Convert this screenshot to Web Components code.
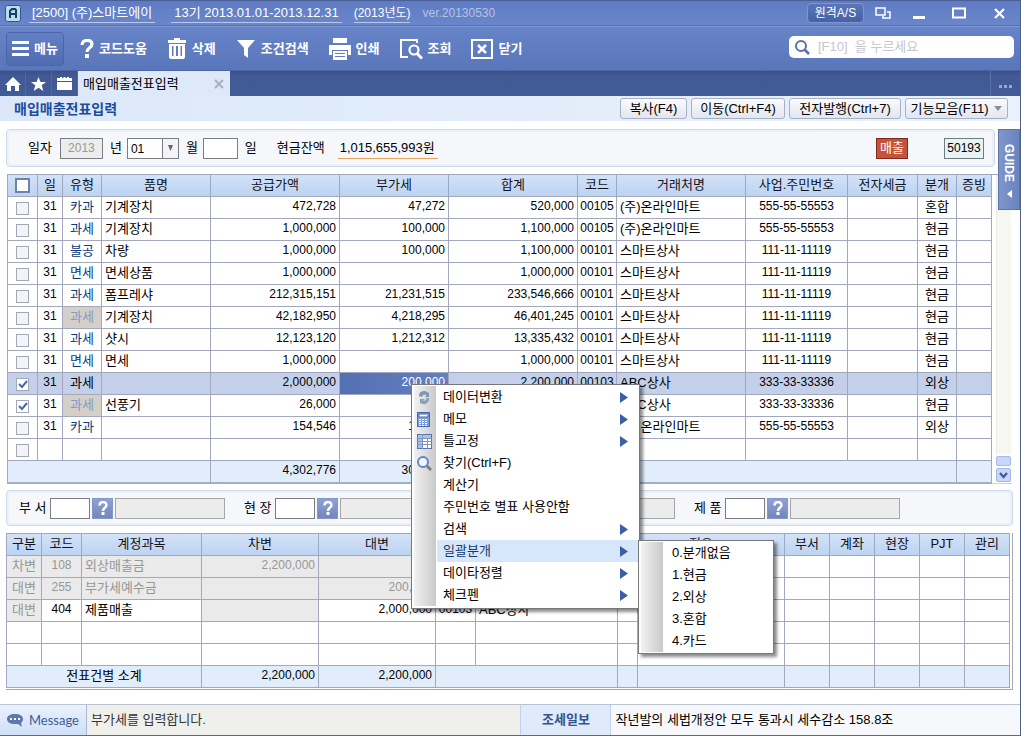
<!DOCTYPE html>
<html lang="ko">
<head>
<meta charset="utf-8">
<meta name="viewport" content="width=device-width, initial-scale=1">
<title>매입매출전표입력</title>
<style>
  html, body { margin: 0; height: 100%; }
  body {
    font: 13px/20px "Liberation Sans", "Noto Sans CJK KR", sans-serif;
    color: #000;
    background: #fff;
    --line: #a3a8bd;
    --navy: #415a96;
    --head: linear-gradient(#d3e2f8, #bdd3f1);
  }
</style>
</head>
<body>
<app-window></app-window>

<script>
const base = `
  *, *::before, *::after { box-sizing: border-box; }
  :host { display: block; box-sizing: border-box; }
  button, input, select { font: inherit; color: inherit; margin: 0; border-radius: 0; }
  button { padding: 0; border: 0; background: none; }
  svg { display: block; flex: none; }
`;

function define(name, css, html) {
  customElements.define(name, class extends HTMLElement {
    constructor() {
      super();
      this.attachShadow({ mode: 'open' });
    }
    connectedCallback() {
      const markup = typeof html === 'function' ? html(this) : html;
      this.shadowRoot.innerHTML = `<style>${base}${css}</style>${markup}`;
    }
  });
}

/* ---------- title bar ---------- */
define('title-bar', `
  :host {
    display: flex; align-items: center; height: 26px; padding: 0 13px 0 5px;
    color: #fff; background: linear-gradient(#5f7bc2, #6a87cb);
    border-top: 1px solid #4a5f96; border-bottom: 1px solid #5470b2;
  }
  .logo { margin-right: 8px; }
  .info { border-bottom: 1px solid #b9c8ec; line-height: 18px; padding: 0 3px; margin-right: 12px; white-space: nowrap; }
  .company { margin-right: 16px; }
  .tight { padding: 0; font-size: 12px; }
  .ver { color: #b4c3e6; font-size: 12px; }
  .right { margin-left: auto; display: flex; align-items: center; }
  .remote {
    width: 57px; height: 20px; margin-right: 11px; border-radius: 4px; line-height: 18px; font-size: 12px;
    border: 1px solid #7c94cf; background: linear-gradient(#5b75b8, #4562a6);
  }
  .win { width: 16px; height: 18px; margin-right: 24px; display: flex; justify-content: center; align-items: center; }
  .win.first { margin-right: 20px; }
  .win.last { margin-right: 0; }
`, `
  <svg class="logo" width="16" height="17" viewBox="0 0 16 17"><rect x=".5" y=".5" width="15" height="16" rx="2" fill="#b9dde9" stroke="#31568c"/><path d="M5 13V6l2-2h3l1 1v8M5 9h6" fill="none" stroke="#1d3c66" stroke-width="2"/></svg>
  <span class="info company">[2500] (주)스마트에이</span>
  <span class="info">13기 2013.01.01-2013.12.31</span>
  <span class="info tight">(2013년도)</span>
  <span class="ver">ver.20130530</span>
  <div class="right">
    <button class="remote">원격A/S</button>
    <button class="win first" aria-label="창 배열"><svg width="16" height="13" viewBox="0 0 16 13" fill="none" stroke="#fff" stroke-width="1.500"><path d="M1 1h9v7H1z"/><path d="M12 5h3v6H8V9"/></svg></button>
    <button class="win" aria-label="최소화"><svg width="12" height="12"><rect y="9" width="12" height="3" fill="#fff"/></svg></button>
    <button class="win" aria-label="최대화"><svg width="14" height="12"><rect x="1" y="1.500" width="12" height="9" fill="none" stroke="#fff" stroke-width="2"/></svg></button>
    <button class="win last" aria-label="닫기"><svg width="11" height="11" viewBox="0 0 11 11"><path d="M1 1l9 9M10 1l-9 9" stroke="#fff" stroke-width="2.200"/></svg></button>
  </div>
`);

/* ---------- tool bar ---------- */
define('tool-button', `
  button { display: flex; align-items: center; gap: 5px; height: 34px; font-weight: bold; color: #fff; white-space: nowrap; }
  :host([boxed]) button {
    width: 58px; justify-content: center; border-radius: 4px; border: 1px solid #4a66ab;
    background: linear-gradient(#6480c4, #4f6cb1);
  }
`, `<button><slot name="icon"></slot><slot></slot></button>`);

define('search-box', `
  :host { display: flex; align-items: center; width: 225px; height: 22px; padding: 0 6px; gap: 8px; background: #fff; border-radius: 5px; }
  input { flex: 1; min-width: 0; border: 0; padding: 0; height: 20px; outline: 0; background: none; color: #333; }
  input::placeholder { color: #c3c5d0; opacity: 1; }
`, `
  <svg width="15" height="15" viewBox="0 0 15 15" fill="none" stroke="#5a70a8"><circle cx="6" cy="6" r="5" stroke-width="2"/><path d="M9.500 9.500l4.500 4.500" stroke-width="2.500"/></svg>
  <input type="text" aria-label="메뉴 검색" placeholder="[F10]  을 누르세요">
`);

define('tool-bar', `
  :host {
    display: flex; align-items: center; gap: 20px; height: 45px; padding: 0 6px;
    background: linear-gradient(#6784c9, #5a76bb); border-top: 1px solid #7d97d3; border-bottom: 1px solid #4c66a8;
  }
  tool-button[boxed] { margin-right: -4px; }
  search-box { margin: 0 0 3px auto; }
`, `
  <tool-button boxed><svg slot="icon" width="17" height="15" fill="#fff"><rect width="17" height="3"/><rect y="6" width="17" height="3"/><rect y="12" width="17" height="3"/></svg>메뉴</tool-button>
  <tool-button><svg slot="icon" width="14" height="19" viewBox="0 0 14 19"><path d="M2 6c0-6 10-6 10-1 0 4-5 3.500-5 8" fill="none" stroke="#fff" stroke-width="3.200"/><rect x="5" y="15" width="4" height="4" fill="#fff"/></svg>코드도움</tool-button>
  <tool-button><svg slot="icon" width="20" height="21" viewBox="0 0 20 21" fill="#fff"><path d="M7 0h6v2h6v3H1V2h6z"/><path fill-rule="evenodd" d="M2 6h16v13q0 2-2 2H4q-2 0-2-2zM5 8v10h1.500V8zm4 0v10h2V8zm4.500 0v10H15V8z"/></svg>삭제</tool-button>
  <tool-button><svg slot="icon" width="20" height="18" viewBox="0 0 20 18"><path d="M1 0h18l-7 8v10l-4-3V8z" fill="#fff"/></svg>조건검색</tool-button>
  <tool-button><svg slot="icon" width="22" height="22" viewBox="0 0 22 22" fill="#fff"><path d="M4 0h14v5H4zM0 7h22v10h-3v-5H3v5H0z"/><path fill-rule="evenodd" d="M4 13h14v9H4zm2 2v1h10v-1zm0 3v1h10v-1z"/></svg>인쇄</tool-button>
  <tool-button><svg slot="icon" width="23" height="22" viewBox="0 0 23 22" fill="none" stroke="#fff" stroke-width="2"><path d="M8 19H1V2h16v3"/><circle cx="14" cy="12" r="4.500" stroke-width="2.200"/><path d="M17 15.500l5 5" stroke-width="3"/></svg>조회</tool-button>
  <tool-button><svg slot="icon" width="22" height="20" viewBox="0 0 22 20" fill="none" stroke="#fff"><rect x="1" y="1" width="20" height="18" stroke-width="2"/><path d="M7 6l8 8M15 6l-8 8" stroke-width="2.500"/></svg>닫기</tool-button>
  <search-box></search-box>
`);

/* ---------- tabs ---------- */
define('tab-strip', `
  :host { display: flex; height: 25px; background: linear-gradient(#3a5089, var(--navy) 20%, #415b97); }
  .quick { width: 26px; display: flex; align-items: center; justify-content: center; border-right: 1px solid #4e68a4; }
  .tab { width: 152px; padding: 0 6px 0 5px; display: flex; align-items: center; justify-content: space-between; background: #dde8f9; }
  .tab span { white-space: nowrap; }
  .more { margin-left: auto; width: 30px; border-left: 1px solid #5a73ac; display: flex; align-items: center; justify-content: center; padding-top: 5px; }
`, `
  <button class="quick" aria-label="홈"><svg width="16" height="14" viewBox="0 0 16 14" fill="#fff"><path d="M8 0l8 8h-2v6h-4V9H6v5H2V8H0z"/></svg></button>
  <button class="quick" aria-label="즐겨찾기"><svg width="15" height="14" viewBox="0 0 15 14" fill="#fff"><path d="M7.500 0l2 5H15l-4.300 3.300L12.300 14 7.500 10.700 2.700 14l1.600-5.700L0 5h5.500z"/></svg></button>
  <button class="quick" aria-label="일정"><svg width="15" height="13" viewBox="0 0 15 13" fill="#fff"><path d="M0 1h3V0h2v1h1.500V0h2v1H10V0h2v1h3v3H0zM0 5h15v8H0z"/></svg></button>
  <div class="tab"><span>매입매출전표입력</span><button aria-label="탭 닫기"><svg width="10" height="10" viewBox="0 0 10 10"><path d="M1 1l8 8M9 1l-8 8" stroke="#aab0bd" stroke-width="2"/></svg></button></div>
  <button class="more" aria-label="더 보기"><svg width="14" height="3" fill="#95a7d0"><rect width="3" height="3"/><rect x="5" width="3" height="3"/><rect x="10" width="3" height="3"/></svg></button>
`);

/* ---------- page heading with actions ---------- */
define('action-bar', `
  :host { display: flex; align-items: center; height: 25px; padding: 0 12px 0 14px; gap: 4px; background: linear-gradient(90deg, #dce8f9, #e9f1fb); }
  h1 { margin: 0 auto 0 0; font-size: 14px; line-height: 20px; color: #1c4c9e; }
  button {
    height: 21px; line-height: 19px; border: 1px solid #a7b1c5; border-radius: 3px; white-space: nowrap;
    background: linear-gradient(#fbfbfd, #e3e6ee); display: flex; align-items: center; justify-content: center; gap: 6px;
  }
  .w1 { width: 67px; } .w2 { width: 94px; } .w3 { width: 112px; } .w4 { width: 103px; }
`, `
  <h1>매입매출전표입력</h1>
  <button class="w1">복사(F4)</button>
  <button class="w2">이동(Ctrl+F4)</button>
  <button class="w3">전자발행(Ctrl+7)</button>
  <button class="w4">기능모음(F11)<svg width="8" height="5"><path d="M0 0h8l-4 5z" fill="#8a8f9c"/></svg></button>
`);

/* ---------- rounded panel that holds fields ---------- */
define('field-panel', `
  :host {
    display: flex; align-items: center; border: 1px solid #cfdae9; border-radius: 4px;
    background: #f5f7fb; box-shadow: inset 0 0 0 2px #eaf1f9;
  }
`, `<slot></slot>`);

define('date-fields', `
  :host { display: flex; align-items: center; flex: 1; white-space: nowrap; padding: 0 10px 0 21px; }
  input, select { height: 21px; padding: 0 3px; border: 1px solid #7c7c84; background: #fff; font-size: 12px; }
  label { margin: 0 5px 0 7px; }
  label.first { margin: 0 8px 0 0; }
  .year { width: 43px; text-align: center; color: #9a9a9a; background: #ececec; }
  .month { display: grid; width: 52px; }
  .month > * { grid-area: 1 / 1; }
  select { width: 52px; appearance: none; }
  .arrow {
    justify-self: end; width: 17px; height: 21px; border: 1px solid #7c7c84; background: #f4f4f6; pointer-events: none;
    display: flex; align-items: center; justify-content: center;
  }
  .day { width: 35px; }
  .cash { margin: 0 13px 0 15px; }
  output.sum { border-bottom: 1px solid #eba557; padding: 0 3px 0 2px; }
  .kind { margin-left: auto; width: 32px; height: 21px; line-height: 18px; text-align: center; color: #fff; background: #c4533a; border: 1px solid #7e2a1c; }
  .no { margin-left: 36px; width: 40px; height: 21px; line-height: 19px; text-align: center; font-size: 12px; border: 1px solid #6d7d7d; background: #e8f3f3; }
`, `
  <label class="first" for="y">일자</label><input id="y" class="year" value="2013" disabled>
  <label for="y">년</label>
  <div class="month"><select id="m" aria-label="월"><option>01</option></select><span class="arrow"><svg width="5" height="6"><path d="M0 0h5L2.500 6z" fill="#666"/></svg></span></div>
  <label for="m">월</label><input id="d" class="day">
  <label for="d">일</label>
  <span class="cash">현금잔액</span><output class="sum">1,015,655,993원</output>
  <span class="kind">매출</span><span class="no">50193</span>
`);

define('code-lookup', `
  :host { display: flex; align-items: center; width: 225px; }
  label { width: 31px; white-space: nowrap; }
  input { height: 21px; padding: 0 3px; border: 1px solid #7c7c84; background: #fff; }
  .code { width: 40px; }
  .name { width: 110px; border-color: #a6a6aa; background: #ececec; }
  button { width: 21px; height: 21px; margin: 0 2px; color: #fff; background: linear-gradient(#8ea2d4, #7286bf); border: 1px solid #8597c7; display: flex; align-items: center; justify-content: center; }
`, el => `
  <label for="c">${el.getAttribute('label') || ''}</label><input id="c" class="code" aria-label="${el.getAttribute('name')}">
  <button aria-label="${el.getAttribute('name')} 찾기"><svg width="10" height="14" viewBox="0 0 10 14"><path d="M1.500 4.500c0-4.500 7-4.500 7-.5C8.500 7 5 6.500 5 10" fill="none" stroke="#fff" stroke-width="2.400"/><rect x="3.500" y="11" width="3" height="3" fill="#fff"/></svg></button>
  <input class="name" aria-label="${el.getAttribute('name')}명" disabled>
`);

/* ---------- tables ---------- */
const tableCss = `
  table { width: 100%; table-layout: fixed; border-collapse: separate; border-spacing: 0; border: 1px solid var(--line); border-width: 1px 0 0 1px; background: #fff; }
  th, td { height: 22px; line-height: 19px; padding: 0 3px 2px; border: 1px solid var(--line); border-width: 0 1px 1px 0; overflow: hidden; white-space: nowrap; text-align: left; font-weight: normal; }
  th { background: var(--head); text-align: center; color: #10141f; padding: 0 0 2px; border-right-color: #9aa9c6; }
  .n { text-align: right; font-size: 12px; }
  .c { text-align: center; }
  .d { text-align: center; font-size: 12px; padding: 0 0 2px; }
  tfoot td { background: #e2edfb; }
`;
const cols = list => `<colgroup>${list.map(w => `<col style="width:${w}px">`).join('')}</colgroup>`;

const vouchers = [
  ['카과', '기계장치', '472,728', '47,272', '520,000', '00105', '(주)온라인마트', '555-55-55553', '혼합'],
  ['과세', '기계장치', '1,000,000', '100,000', '1,100,000', '00105', '(주)온라인마트', '555-55-55553', '현금'],
  ['불공', '차량', '1,000,000', '100,000', '1,100,000', '00101', '스마트상사', '111-11-11119', '현금'],
  ['면세', '면세상품', '1,000,000', '', '1,000,000', '00101', '스마트상사', '111-11-11119', '현금'],
  ['과세', '폼프레샤', '212,315,151', '21,231,515', '233,546,666', '00101', '스마트상사', '111-11-11119', '현금'],
  ['과세', '기계장치', '42,182,950', '4,218,295', '46,401,245', '00101', '스마트상사', '111-11-11119', '현금', 'locked'],
  ['과세', '샷시', '12,123,120', '1,212,312', '13,335,432', '00101', '스마트상사', '111-11-11119', '현금'],
  ['면세', '면세', '1,000,000', '', '1,000,000', '00101', '스마트상사', '111-11-11119', '현금'],
  ['과세', '', '2,000,000', '200,000', '2,200,000', '00103', 'ABC상사', '333-33-33336', '외상', 'current checked'],
  ['과세', '선풍기', '26,000', '2,600', '28,600', '00103', 'ABC상사', '333-33-33336', '현금', 'locked checked'],
  ['카과', '', '154,546', '15,454', '170,000', '00105', '(주)온라인마트', '555-55-55553', '외상'],
  ['', '', '', '', '', '', '', '', '']
];

define('voucher-table', tableCss + `
  :host { display: flex; }
  table { flex: 1; min-width: 0; }
  input {
    display: block; appearance: none; width: 13px; height: 13px; margin: 2px auto 0;
    border: 1px solid #a3a8b6; background: #f3f4f7;
  }
  th input { width: 15px; height: 15px; border: 2px solid #6f82ab; background: #fff; margin-top: 0; }
  td:first-child, th:first-child { padding: 0; }
  input:checked { background: #fff url('data:image/svg+xml,<svg xmlns="http://www.w3.org/2000/svg" width="11" height="11"><path d="M2 5l3 3 5-6" fill="none" stroke="%234a66ad" stroke-width="2"/></svg>') center no-repeat; }
  .type { color: #0b3c7c; text-align: center; padding: 0 0 2px; }
  .locked .type { color: #8497c8; background: #d4d0c9; }
  .current td { background: #c4d0e9; }
  .current .type { color: #000; }
  .current .vat { background: linear-gradient(90deg, #5570b2, #6480c0); color: #fff; }
  tfoot td { border-bottom: 2px solid #9db0cd; }
  .scroll {
    width: 21px; padding: 0 1px 1px 4px; border-top: 1px solid var(--line); border-bottom: 1px solid #cdd3de;
    display: flex; flex-direction: column; align-items: stretch; justify-content: flex-end; gap: 2px;
  }
  .track { flex: 1; background: #f6f6f2; border-left: 1px solid #ecece6; }
  .thumb { height: 10px; border: 1px solid #a6b9e4; border-radius: 2px; background: #c7d6fb; }
  .scroll button { height: 14px; border: 1px solid #a6b9e4; border-radius: 2px; background: #c7d6fb; display: flex; align-items: center; justify-content: center; }
`, () => `
  <table>
    ${cols([30, 25, 39, 109, 129, 109, 129, 39, 129, 102, 70, 39, 35])}
    <thead><tr><th><input type="checkbox" aria-label="전체 선택"></th>${['일', '유형', '품명', '공급가액', '부가세', '합계', '코드', '거래처명', '사업.주민번호', '전자세금', '분개', '증빙'].map(t => `<th>${t}</th>`).join('')}</tr></thead>
    <tbody>${vouchers.map(([type, item, supply, vat, sum, code, client, biz, entry, state = '']) => `
      <tr class="${state}">
        <td><input type="checkbox" aria-label="행 선택" ${state.includes('checked') ? 'checked' : ''}></td>
        <td class="d">${type ? '31' : ''}</td><td class="type">${type}</td><td>${item}</td>
        <td class="n">${supply}</td><td class="n vat">${vat}</td><td class="n">${sum}</td><td class="d">${code}</td>
        <td>${client}</td><td class="d">${biz}</td><td></td><td class="c">${entry}</td><td></td>
      </tr>`).join('')}</tbody>
    <tfoot><tr><td colspan="4"></td><td class="n">4,302,776</td><td class="n">300,277</td><td></td><td colspan="5"></td><td></td></tr></tfoot>
  </table>
  <div class="scroll"><div class="track"></div><div class="thumb"></div><button aria-label="아래로"><svg width="9" height="7"><path d="M1 1l3.500 4L8 1" fill="none" stroke="#3f5a96" stroke-width="2.200"/></svg></button></div>
`);

const empty = n => '<td></td>'.repeat(n);
define('journal-table', tableCss + `
  :host { border: 1px solid var(--line); border-width: 0 1px 1px 0; padding: 0 2px 1px 0; background: #fff; }
  .g { background: #eaeaea; color: #979797; }
`, `
  <table>
    ${cols([35, 40, 120, 117, 117, 40, 142, 20, 147, 45, 45, 45, 45, 45])}
    <thead><tr>${['구분', '코드', '계정과목', '차변', '대변', '', ''].map(t => `<th>${t}</th>`).join('')}<th colspan="2">적요</th>${['부서', '계좌', '현장', 'PJT', '관리'].map(t => `<th>${t}</th>`).join('')}</tr></thead>
    <tbody>
      <tr><td class="g c">차변</td><td class="g d">108</td><td class="g">외상매출금</td><td class="g n">2,200,000</td><td class="g"></td>${empty(9)}</tr>
      <tr><td class="g c">대변</td><td class="g d">255</td><td class="g">부가세예수금</td><td class="g"></td><td class="g n">200,000</td>${empty(9)}</tr>
      <tr><td class="g c">대변</td><td class="d">404</td><td>제품매출</td><td class="g"></td><td class="n">2,000,000</td><td class="d">00103</td><td>ABC상사</td>${empty(7)}</tr>
      <tr>${empty(14)}</tr>
      <tr>${empty(14)}</tr>
    </tbody>
    <tfoot><tr><td colspan="3" class="c">전표건별 소계</td><td class="n">2,200,000</td><td class="n">2,200,000</td><td colspan="2"></td>${empty(7)}</tr></tfoot>
  </table>
`);

/* ---------- guide tab at the window edge ---------- */
define('guide-tab', `
  button {
    display: flex; flex-direction: column; align-items: center; justify-content: space-between; width: 22px; height: 81px;
    padding: 14px 0 11px; color: #fff; border: 1px solid #5d74ab; background: linear-gradient(90deg, #7f97cb, #6a83bd);
  }
  span { writing-mode: vertical-rl; font-weight: bold; font-size: 12px; line-height: 18px; }
`, `<button><span>GUIDE</span><svg width="5" height="8"><path d="M5 0v8L0 4z" fill="#fff"/></svg></button>`);

/* ---------- menus ---------- */
define('popup-menu', `
  :host { background: #fff; border: 1px solid #77777c; padding: 1px 1px 1px 2px; box-shadow: 3px 3px 3px rgba(0, 0, 0, .45); }
  .list { padding-left: 23px; background: linear-gradient(90deg, #f2f2f2, #c9c9c9) 0 0 / 22px 100% no-repeat; }
`, `<div class="list" role="menu"><slot></slot></div>`);

define('menu-item', `
  :host { position: relative; height: 22px; }
  button { display: flex; align-items: center; width: 100%; height: 22px; padding: 0 10px 0 6px; text-align: left; white-space: nowrap; }
  :host([active]) button { background: #d6e7fc; color: #123a72; }
  .arrow { margin-left: auto; }
  ::slotted(svg) { position: absolute; left: -20px; top: 4px; }
  ::slotted(popup-menu) { position: absolute; left: 100%; top: 0; width: 136px; z-index: 2; }
`, el => `
  <slot name="icon"></slot>
  <button role="menuitem"><slot></slot>${el.hasAttribute('more') ? '<svg class="arrow" width="8" height="11"><path d="M0 0v11l8-5.500z" fill="#3c5ea6"/></svg>' : ''}</button>
  <slot name="sub"></slot>
`);

define('context-menu', `
  .wide { width: 229px; padding-top: 1px; padding-bottom: 2px; }
  .sub menu-item { padding-left: 2px; }
`, `
  <popup-menu class="wide">
    <menu-item more><svg slot="icon" width="15" height="15" viewBox="0 0 15 15"><path d="M2 6a5 5 0 0 1 9-3l1-1v5H8l1.500-2A3 3 0 0 0 5 7z" fill="#7e93b8"/><path d="M12 8a5 5 0 0 1-8 5l-1 1V9h5l-2 2a3 3 0 0 0 3.500-3z" fill="#8e9eb8"/></svg>데이터변환</menu-item>
    <menu-item more><svg slot="icon" width="13" height="15" viewBox="0 0 13 15"><rect x=".5" y=".5" width="12" height="14" fill="#7fa0d8" stroke="#4668a8"/><path d="M2 2h9v3H2z" fill="#fff" stroke="#4668a8"/><path d="M2 7.500h9M2 9.500h9M2 11.500h9M2 13.500h9" stroke="#fff" stroke-dasharray="2 1"/></svg>메모</menu-item>
    <menu-item more><svg slot="icon" width="15" height="15" viewBox="0 0 15 15"><rect x=".5" y=".5" width="14" height="14" fill="#fff" stroke="#5574b0"/><path d="M1 1h13v3H1zM1 4h4v10H1z" fill="#a9c1ee"/><path d="M0 4.500h15M5.500 0v15M5 7.500h10M5 10.500h10M10.500 4v11M0 7.500h5M0 10.500h5" stroke="#7e95c2"/></svg>틀고정</menu-item>
    <menu-item><svg slot="icon" width="15" height="15" viewBox="0 0 15 15" fill="none"><circle cx="6" cy="6" r="5" fill="#eef5ff" stroke="#6586c4" stroke-width="2"/><path d="M10 10l4 4" stroke="#7d7d80" stroke-width="3"/></svg>찾기(Ctrl+F)</menu-item>
    <menu-item>계산기</menu-item>
    <menu-item>주민번호 별표 사용안함</menu-item>
    <menu-item more>검색</menu-item>
    <menu-item more active>일괄분개
      <popup-menu slot="sub" class="sub">
        <menu-item>0.분개없음</menu-item>
        <menu-item>1.현금</menu-item>
        <menu-item>2.외상</menu-item>
        <menu-item>3.혼합</menu-item>
        <menu-item>4.카드</menu-item>
      </popup-menu>
    </menu-item>
    <menu-item more>데이타정렬</menu-item>
    <menu-item more>체크펜</menu-item>
  </popup-menu>
`);

/* ---------- status bar ---------- */
define('status-bar', `
  :host { display: grid; grid-template-columns: 87px 434fr 91px 409fr; height: 32px; line-height: 29px; border-top: 1px solid #b9c3d2; border-bottom: 1px solid #5a6a8c; white-space: nowrap; }
  div { overflow: hidden; padding: 0 4px; }
  .msg { display: flex; align-items: center; gap: 6px; padding-left: 7px; font-family: Lato, sans-serif; color: #3d5c98; background: linear-gradient(#e9f1fc, #cfe0f7); border-right: 1px solid #a9b9d6; }
  .text { color: #333; background: #efefec; }
  .brand { text-align: center; font-weight: bold; color: #35538f; background: #dfeafb; border: 1px solid #c3d2ea; border-width: 0 1px; }
  .news { background: #f7f8fc; }
`, `
  <div class="msg"><svg width="16" height="13" viewBox="0 0 16 13"><path d="M8 0c5 0 8 2 8 5 0 2-1 3-2 4l1 4-4-3H8C3 10 0 8 0 5s3-5 8-5z" fill="#5d78b0"/><path d="M3 5h2M7 5h2M11 5h2" stroke="#fff" stroke-width="2"/></svg>Message</div>
  <div class="text">부가세를 입력합니다.</div>
  <div class="brand">조세일보</div>
  <div class="news">작년발의 세법개정안 모두 통과시 세수감소 158.8조</div>
`);

/* ---------- window ---------- */
define('app-window', `
  :host { position: relative; display: flex; flex-direction: column; min-height: 100vh; overflow: hidden; border-right: 1px solid #4a5f94; background: #fff; }
  main { flex: 1; padding: 8px 7px 0 6px; }
  .date { height: 38px; margin: 0 18px 7px 0; }
  voucher-table { margin: 0 1px; }
  .lookup { height: 36px; margin: 6px 0 7px; padding-left: 12px; }
  guide-tab { position: absolute; right: 0; top: 129px; }
  context-menu { position: absolute; left: 411px; top: 384px; }
`, `
  <title-bar></title-bar>
  <tool-bar></tool-bar>
  <tab-strip></tab-strip>
  <action-bar></action-bar>
  <main>
    <field-panel class="date"><date-fields></date-fields></field-panel>
    <voucher-table></voucher-table>
    <field-panel class="lookup">
      <code-lookup label="부 서" name="부서"></code-lookup>
      <code-lookup label="현 장" name="현장"></code-lookup>
      <code-lookup name="사원"></code-lookup>
      <code-lookup label="제 품" name="제품"></code-lookup>
    </field-panel>
    <journal-table></journal-table>
  </main>
  <status-bar></status-bar>
  <guide-tab></guide-tab>
  <context-menu></context-menu>
`);
</script>
</body>
</html>
